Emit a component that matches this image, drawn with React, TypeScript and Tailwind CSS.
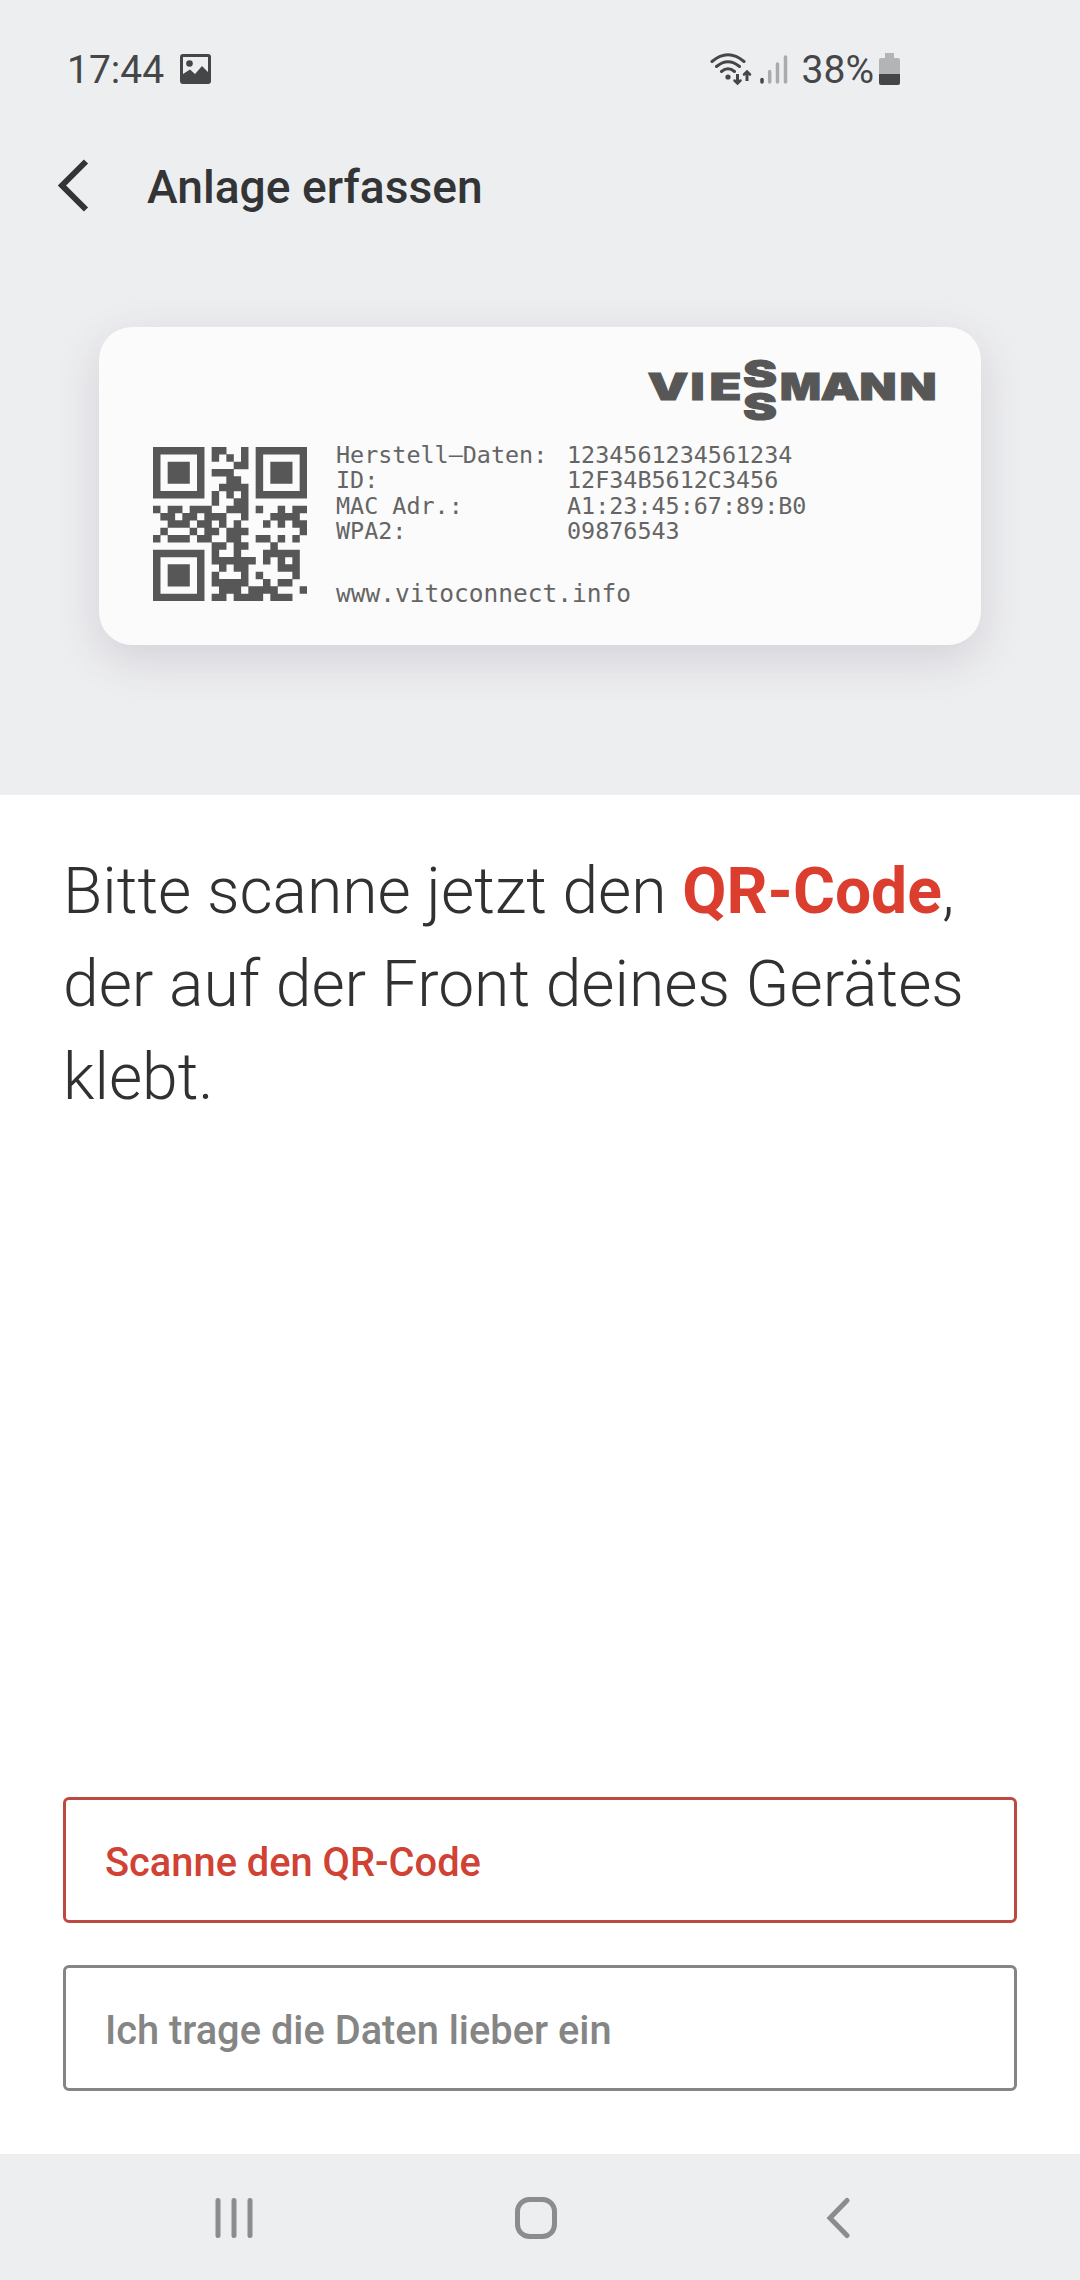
const QR_ROWS = [
  "111111101100101111111",
  "100000101010101000001",
  "101110100001101011101",
  "101110101110001011101",
  "101110100011001011101",
  "100000100111101000001",
  "111111101010101111111",
  "000000001001100000000",
  "101101110011101001011",
  "011011011100100011110",
  "001110110101000101011",
  "010001011011100000001",
  "101110110011001101010",
  "000000001101100010000",
  "111111101001000111110",
  "100000101111110101010",
  "101110100101100001110",
  "101110101000101000010",
  "101110101111100101100",
  "100000100111011110001",
  "111111101101111011100",
];

// one path for all modules, so no seams show between neighbours
const QR_PATH = QR_ROWS.flatMap((row, y) =>
  [...row].map((c, x) => (c === "1" ? `M${x} ${y}h1.02v1.02h-1.02z` : ""))
).join("");

const LABEL_DATA = [
  ["Herstell–Daten:", "1234561234561234"],
  ["ID:", "12F34B5612C3456"],
  ["MAC Adr.:", "A1:23:45:67:89:B0"],
  ["WPA2:", "09876543"],
];

// letter, x, baseline, advance
const LOGO_LETTERS: [string, number, number, number][] = [
  ["V", 1.5, 43, 41],
  ["I", 44.5, 43, 14],
  ["E", 63.5, 43, 32],
  ["S", 97, 29.5, 34],
  ["S", 97, 62.5, 34],
  ["M", 134, 43, 41],
  ["A", 174.5, 43, 39],
  ["N", 213.5, 43, 37],
  ["N", 253.5, 43, 37],
];

function QrCode() {
  return (
    <svg className="w-[154px] h-[154px] mt-[120px]" viewBox="0 0 21 21" fill="#575757">
      <path d={QR_PATH} />
    </svg>
  );
}

// Wordmark with the two S stacked between VIE and MANN
function Logo() {
  return (
    <svg
      className="w-[290px] h-[64px] self-end mr-[45px] overflow-visible"
      viewBox="0 0 290 64"
      fill="#575757"
      stroke="#575757"
      strokeWidth={1}
      fontFamily="Inter, sans-serif"
      fontWeight={900}
      fontSize={36.5}
    >
      <text>
        {LOGO_LETTERS.map(([letter, x, y, width], i) => (
          <tspan key={i} x={x} y={y} textLength={width} lengthAdjust="spacingAndGlyphs">{letter}</tspan>
        ))}
      </text>
    </svg>
  );
}

function StatusBar() {
  return (
    <div className="flex items-center h-[138px] pl-[67px] pr-[180px] text-[#454648] text-[39px] leading-none">
      <span className="pt-0.5">17:44</span>
      <svg className="ml-4 w-[31px] h-[30px]" viewBox="0 0 31 30">
        <path fillRule="evenodd" fill="#454648" d="M3 0H28Q31 0 31 3V27Q31 30 28 30H3Q0 30 0 27V3Q0 0 3 0ZM3 3V20L10 15.5L15 20L22 12L28 18V3Z" />
        <circle cx={9.5} cy={9.5} r={3.3} fill="#454648" />
      </svg>

      <div className="ml-auto flex items-center">
        <svg className="w-[42px] h-[33px]" viewBox="0 0 42 33" fill="none" stroke="#454648" strokeWidth={3} strokeLinecap="round">
          <path d="M2 8.5Q18 -5 34 8.5M6.5 13.5Q18 4 29.5 13.5M11.5 18.5Q18 13 24.5 18.5" />
          <circle cx={18} cy={24} r={2.6} fill="#454648" stroke="none" />
          <path strokeLinecap="butt" d="M27.5 21V30M37 28V20" />
          <path strokeWidth={2.5} d="M24.5 27.5L27.5 30.5L30.5 27.5M34 21.5L37 18.5L40 21.5" />
        </svg>
        <svg className="ml-2 w-[28px] h-[32px]" viewBox="0 0 28 32" strokeWidth={3.5} strokeLinecap="round">
          <path stroke="#454648" d="M2 26.5V29" />
          <path stroke="#ababac" d="M9.7 18.5V29M17.5 11V29M25.5 4V29" />
        </svg>
        <span className="ml-[14px] pt-0.5">38%</span>
        <svg className="ml-[5px] w-[21px] h-[32px]" viewBox="0 0 21 32">
          <path fill="#b3b4b5" d="M6 0H15V5H19Q21 5 21 7V21H0V7Q0 5 2 5H6Z" />
          <path fill="#454648" d="M0 21H21V30Q21 32 19 32H2Q0 32 0 30Z" />
        </svg>
      </div>
    </div>
  );
}

function DeviceLabel() {
  return (
    <div className="flex mx-[99px] mt-[91px] h-[318px] rounded-[33px] bg-[#fbfbfb] shadow-[0_14px_44px_rgba(80,65,95,0.16)]">
      <div className="w-[54px]" />
      <QrCode />
      <div className="flex-1 flex flex-col pt-[30px] pl-[29px]">
        <Logo />
        <dl className="mt-[22px] font-['DejaVu_Sans_Mono','Liberation_Mono',monospace] text-[23.4px] leading-[25.3px] text-[#656565]">
          {LABEL_DATA.map(([name, value]) => (
            <div key={name} className="flex">
              <dt className="w-[231px]">{name}</dt>
              <dd>{value}</dd>
            </div>
          ))}
          <dd className="mt-[37px] text-[24.5px]">www.vitoconnect.info</dd>
        </dl>
      </div>
    </div>
  );
}

export default function App() {
  return (
    <div className="w-[1080px] h-[2280px] flex flex-col bg-white overflow-hidden font-[Roboto,sans-serif]">
      <header className="h-[795px] bg-[#edeef0]">
        <StatusBar />
        <div className="flex items-center h-[98px] pl-[58px]">
          <svg className="w-[31px] h-[53px] mb-1" viewBox="0 0 31 53" fill="none" stroke="#333436" strokeWidth={6}>
            <path d="M28 2.5L4 26.5L28 50.5" />
          </svg>
          <h1 className="ml-[58px] pt-0.5 text-[46.2px] font-medium text-[#333436]">Anlage erfassen</h1>
        </div>
        <DeviceLabel />
      </header>

      <main className="flex-1 flex flex-col px-[63px] pb-[63px]">
        <p className="mt-[50px] text-[64.2px] leading-[93px] font-light text-[#303133] whitespace-nowrap">
          Bitte scanne jetzt den <strong className="font-bold text-[#db3d2e]">QR-Code</strong>,
          <br />
          der auf der Front deines Gerätes
          <br />
          klebt.
        </p>
        <div className="mt-auto flex flex-col gap-[42px] text-[39.8px] font-medium">
          <button className="h-[126px] pl-[39px] pt-1.5 text-left border-3 rounded-md border-[#bd4a40] text-[#d04234]">
            Scanne den QR-Code
          </button>
          <button className="h-[126px] pl-[39px] pt-1.5 text-left border-3 rounded-md border-[#858585] text-[#858585]">
            Ich trage die Daten lieber ein
          </button>
        </div>
      </main>

      <nav className="h-[126px] flex items-center pl-[213px] pt-0.5 bg-[#edeef0]">
        <svg className="w-[42px] h-[42px]" viewBox="0 0 42 42" stroke="#8b8c8e" strokeWidth={5} strokeLinecap="round">
          <path d="M5 3.5V38.5M21 3.5V38.5M37 3.5V38.5" />
        </svg>
        <svg className="ml-[260px] w-[42px] h-[42px]" viewBox="0 0 42 42" fill="none" stroke="#8b8c8e" strokeWidth={5}>
          <rect x={2.5} y={2.5} width={37} height={37} rx={12} />
        </svg>
        <svg className="ml-[269px] w-[25px] h-[42px]" viewBox="0 0 25 42" fill="none" stroke="#8b8c8e" strokeWidth={5} strokeLinecap="round">
          <path d="M21 3.5L4 21L21 38.5" />
        </svg>
      </nav>
    </div>
  );
}
